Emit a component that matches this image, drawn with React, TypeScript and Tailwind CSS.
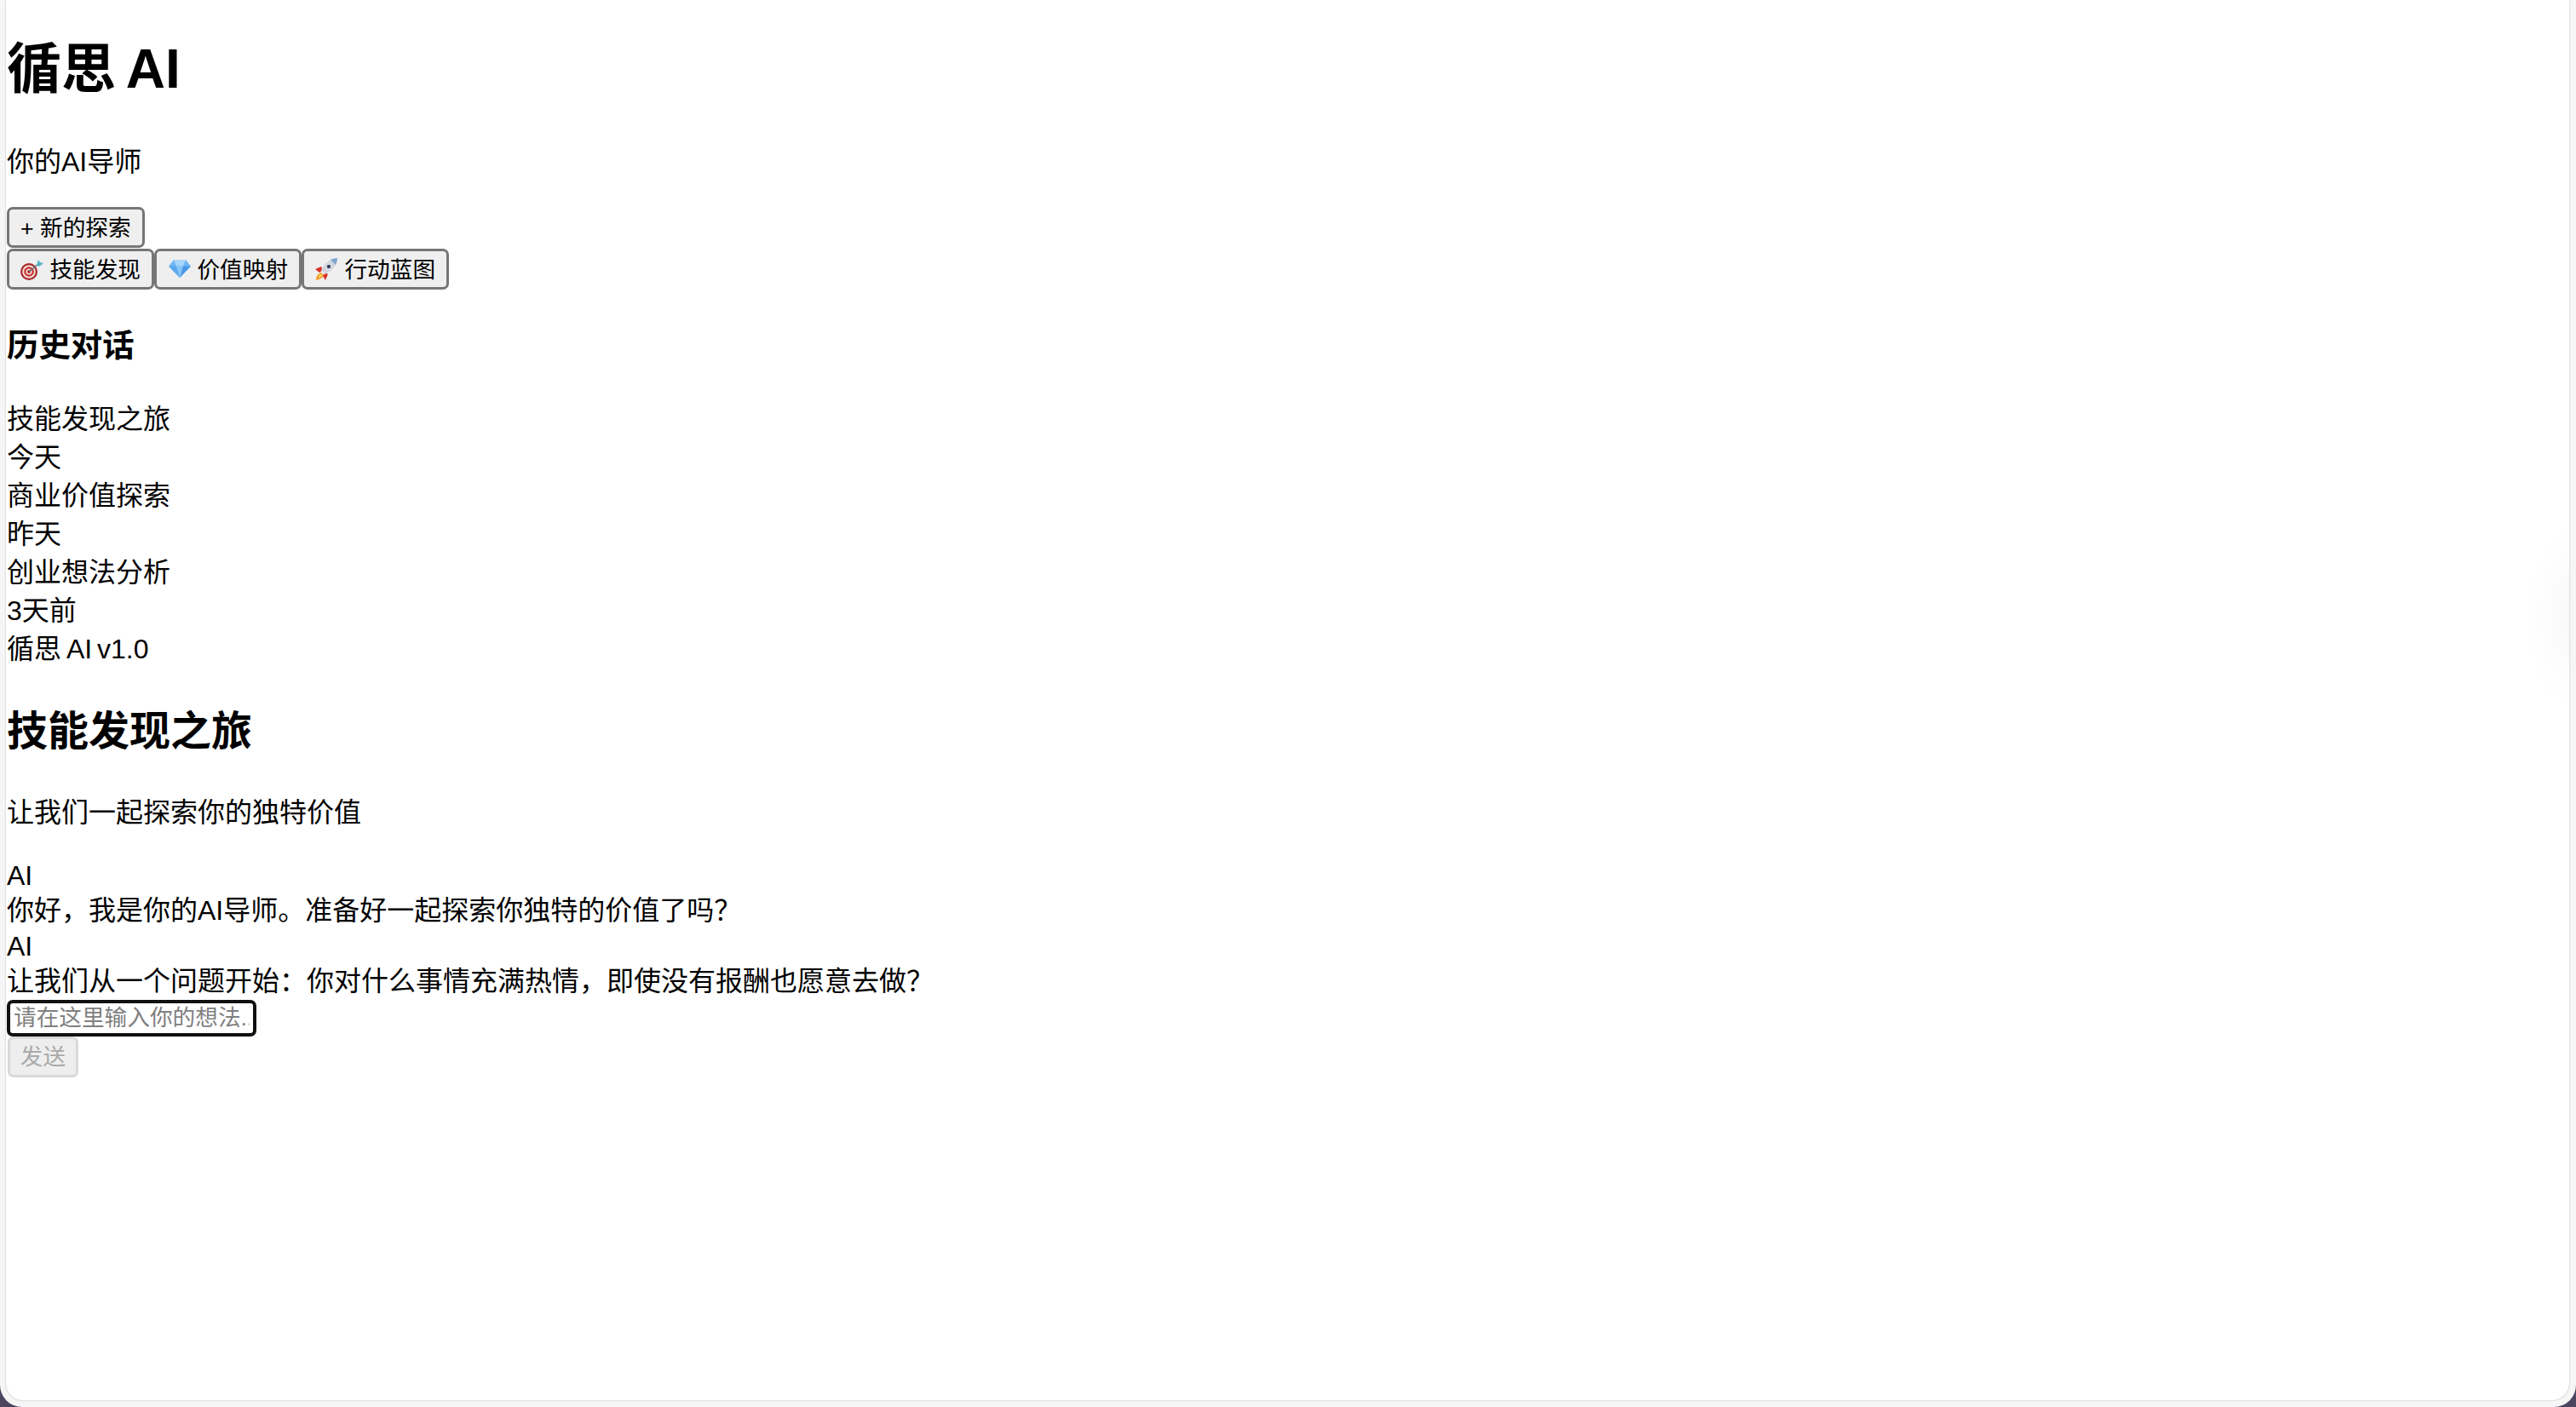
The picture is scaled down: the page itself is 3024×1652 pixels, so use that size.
const fontStack = "[font-family:'Liberation_Sans','Noto_Sans_CJK_SC',sans-serif]";

const emojiClass = "inline-block h-[30px] w-[27px] align-[-7px]";

const TargetIcon = () => (
  <svg viewBox="0 0 27 30" className={emojiClass}>
    <circle cx="10" cy="16" r="10" fill="#a9262b" />
    <circle cx="10" cy="16" r="7.8" fill="#f1dfd8" />
    <circle cx="10" cy="16" r="5.8" fill="#c8302f" />
    <circle cx="10" cy="16" r="3.6" fill="#f1dfd8" />
    <circle cx="10" cy="16" r="1.9" fill="#b3262a" />
    <path d="M10 16 L21 7" stroke="#5b6f78" strokeWidth="1.6" />
    <path d="M19 8 L21 2 L23 5 L27 6 L22 10 Z" fill="#55b4c0" />
  </svg>
);

const GemIcon = () => (
  <svg viewBox="0 0 27 30" className={emojiClass}>
    <path d="M7 2 H21 L27 9.5 L14 23 L1 9.5 Z" fill="#6fb6f5" />
    <path d="M7 2 L10 9.5 H18 L21 2 Z" fill="#a8d6fb" />
    <path d="M1 9.5 H10 L14 23 Z" fill="#5aa8ee" />
    <path d="M27 9.5 H18 L14 23 Z" fill="#4a98e6" />
    <path d="M10 9.5 H18 L14 23 Z" fill="#86c4f8" />
  </svg>
);

const RocketIcon = () => (
  <svg viewBox="0 0 27 30" className={emojiClass}>
    <path d="M1 26 C1 21 4 18 7 17 L10 20 C9 23 6 25 1 26 Z" fill="#f59a23" />
    <path d="M4 23 C4 21 6 19 7 19 L8 20 C8 21 6 23 4 23 Z" fill="#fde26c" />
    <path d="M7 10 L0 13 L5 17 L9 14 Z" fill="#d9342b" />
    <path d="M15 19 L12 26 L9 21 L12 17 Z" fill="#d9342b" />
    <path d="M26 0 C19 0 12 5 7 14 L12 19 C21 14 26 7 26 0 Z" fill="#d3d5dd" />
    <path d="M26 0 C23 0 20 1 18 2 L24 8 C25 6 26 3 26 0 Z" fill="#7fa6cf" />
    <circle cx="16" cy="10" r="2.8" fill="#2f3f5c" stroke="#eef0f4" strokeWidth="1" />
  </svg>
);

const buttonClass =
  "inline-block rounded-[7px] border-[3px] border-[#767676] bg-[#efefef] px-[13px] pt-1 pb-px text-[26.67px] leading-[37px] text-black";

const history = [
  "技能发现之旅",
  "今天",
  "商业价值探索",
  "昨天",
  "创业想法分析",
  "3天前",
  "循思 AI v1.0",
];

export default function App() {
  return (
    <div className={`h-[1652px] w-[3024px] overflow-hidden bg-[#4b4560] ${fontStack}`}>
      <div className="h-full rounded-b-[26px] bg-[#f6f6f6] pr-2 pb-2 pl-[7px]">
        <div className="relative h-full rounded-b-[20px] bg-white pl-px text-[32px] leading-[45px] text-black shadow-[0_0_2px_rgba(0,0,0,0.3)] [word-spacing:-3px]">
          <div className="absolute top-[620px] right-0 h-[210px] w-[50px] bg-[radial-gradient(ellipse_at_right,#f9f9f9,transparent_70%)]" />

          <div className="pt-[41px]">
            <h1 className="text-[64px] leading-[80px] font-bold [word-spacing:-6px]">循思 AI</h1>
            <p className="mt-[47px] mb-[30px]">你的AI导师</p>
            <div className="flex">
              <button className={`${buttonClass} [word-spacing:0]`}>+ 新的探索</button>
            </div>
            <div className="mt-px flex [word-spacing:-3px]">
              <button className={buttonClass}>
                <TargetIcon /> 技能发现
              </button>
              <button className={buttonClass}>
                <GemIcon /> 价值映射
              </button>
              <button className={buttonClass}>
                <RocketIcon /> 行动蓝图
              </button>
            </div>
            <h3 className="mt-10 mb-[38px] text-[37.44px] leading-[52px] font-bold">历史对话</h3>
            <div>
              {history.map((item) => (
                <div key={item}>{item}</div>
              ))}
            </div>
          </div>

          <div>
            <h2 className="mt-[38px] mb-[37px] text-[48px] leading-[72px] font-bold">技能发现之旅</h2>
            <p className="mb-8">让我们一起探索你的独特价值</p>
            <div className="leading-[38px]">AI</div>
            <div>你好，我是你的AI导师。准备好一起探索你独特的价值了吗？</div>
            <div className="leading-[38px]">AI</div>
            <div>让我们从一个问题开始：你对什么事情充满热情，即使没有报酬也愿意去做？</div>
            <input
              placeholder="请在这里输入你的想法..."
              className="-mt-px block h-[43px] w-[293px] rounded-[7px] border-4 border-[#111] bg-white px-1 text-[26.67px] text-black outline-none placeholder:text-[#808080]"
            />
            <button
              disabled
              className="ml-px block h-[48px] w-[83px] rounded-[7px] border-[3px] border-[#d9d9d9] bg-[#eeeeee] text-[26.67px] leading-[37px] text-[#aaaaaa]"
            >
              发送
            </button>
          </div>
        </div>
      </div>
    </div>
  );
}
